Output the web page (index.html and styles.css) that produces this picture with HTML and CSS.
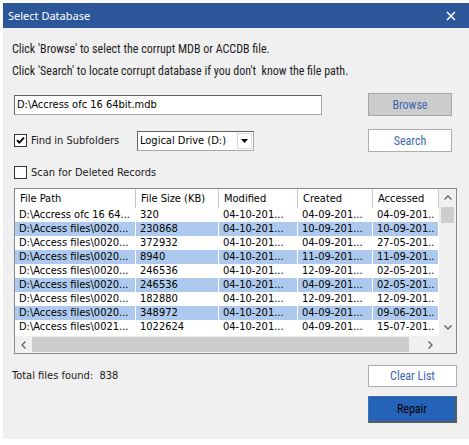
FILE: index.html
```html
<!DOCTYPE html>
<html>
<head>
<meta charset="utf-8">
<title>Select Database</title>
<link rel="stylesheet" href="styles.css">
</head>
<body>
<div class="dialog">
  <div class="titlebar">
    <span class="title">Select Database</span>
    <svg class="close" width="10" height="10" viewBox="0 0 10 10"><path d="M1 1L9 9M9 1L1 9" stroke="#fff" stroke-width="1.5" fill="none"/></svg>
  </div>
  <div class="content">
    <p class="hint">Click 'Browse' to select the corrupt MDB or ACCDB file.</p>
    <p class="hint">Click 'Search' to locate corrupt database if you don't&nbsp; know the file path.</p>

    <div class="row row-path">
      <div class="input">D:\Accress ofc 16 64bit.mdb</div>
      <span></span>
      <button class="btn btn-gray">Browse</button>
    </div>

    <div class="row row-find">
      <div class="check">
        <span class="box"><svg width="11" height="11" viewBox="0 0 11 11"><path d="M2 5.2L4.3 7.6L9 2.6" stroke="#000" stroke-width="1.9" fill="none"/></svg></span>
        <span class="label">Find in Subfolders</span>
      </div>
      <div class="select">
        <span class="select-text">Logical Drive (D:)</span>
        <span class="select-arrow"><svg width="7" height="4" viewBox="0 0 7 4"><path d="M0 0H7L3.5 4Z" fill="#000"/></svg></span>
      </div>
      <span></span>
      <button class="btn">Search</button>
    </div>

    <div class="row row-scan">
      <div class="check">
        <span class="box"></span>
        <span class="label">Scan for Deleted Records</span>
      </div>
    </div>

    <div class="list">
      <div class="cols">
        <div class="grid head">
          <div class="hc">File Path</div>
          <div class="hc">File Size (KB)</div>
          <div class="hc">Modified</div>
          <div class="hc">Created</div>
          <div class="hc">Accessed</div>
        </div>
        <div class="grid tr"><div class="td">D:\Accress ofc 16 64...</div><div class="td">320</div><div class="td">04-10-201...</div><div class="td">04-09-201...</div><div class="td">04-09-201..</div></div>
        <div class="grid tr alt"><div class="td">D:\Access files\0020...</div><div class="td">230868</div><div class="td">04-10-201...</div><div class="td">10-09-201...</div><div class="td">10-09-201..</div></div>
        <div class="grid tr"><div class="td">D:\Access files\0020...</div><div class="td">372932</div><div class="td">04-10-201...</div><div class="td">04-09-201...</div><div class="td">27-05-201..</div></div>
        <div class="grid tr alt"><div class="td">D:\Access files\0020...</div><div class="td">8940</div><div class="td">04-10-201...</div><div class="td">11-09-201...</div><div class="td">11-09-201..</div></div>
        <div class="grid tr"><div class="td">D:\Access files\0020...</div><div class="td">246536</div><div class="td">04-10-201...</div><div class="td">12-09-201...</div><div class="td">02-05-201..</div></div>
        <div class="grid tr alt"><div class="td">D:\Access files\0020...</div><div class="td">246536</div><div class="td">04-10-201...</div><div class="td">04-09-201...</div><div class="td">02-05-201..</div></div>
        <div class="grid tr"><div class="td">D:\Access files\0020...</div><div class="td">182880</div><div class="td">04-10-201...</div><div class="td">12-09-201...</div><div class="td">12-09-201..</div></div>
        <div class="grid tr alt"><div class="td">D:\Access files\0020...</div><div class="td">348972</div><div class="td">04-10-201...</div><div class="td">04-09-201...</div><div class="td">09-06-201..</div></div>
        <div class="grid tr"><div class="td">D:\Access files\0021...</div><div class="td">1022624</div><div class="td">04-10-201...</div><div class="td">04-09-201...</div><div class="td">15-07-201..</div></div>
      </div>
      <div class="vscroll">
        <span class="sb-btn"><svg width="8" height="5" viewBox="0 0 8 5"><path d="M0.5 4.5L4 1L7.5 4.5" stroke="#606060" stroke-width="1.3" fill="none"/></svg></span>
        <span class="vthumb"></span>
        <span class="sb-fill"></span>
        <span class="sb-btn"><svg width="8" height="5" viewBox="0 0 8 5"><path d="M0.5 0.5L4 4L7.5 0.5" stroke="#606060" stroke-width="1.3" fill="none"/></svg></span>
      </div>
      <div class="hscroll">
        <span class="sb-btn"><svg width="5" height="8" viewBox="0 0 5 8"><path d="M4.5 0.5L1 4L4.5 7.5" stroke="#606060" stroke-width="1.3" fill="none"/></svg></span>
        <span class="hthumb"></span>
        <span class="sb-fill"></span>
        <span class="sb-btn"><svg width="5" height="8" viewBox="0 0 5 8"><path d="M0.5 0.5L4 4L0.5 7.5" stroke="#606060" stroke-width="1.3" fill="none"/></svg></span>
      </div>
      <div class="corner"></div>
    </div>

    <div class="footer">
      <span class="total">Total files found:&nbsp; 838</span>
      <div class="actions">
        <button class="btn btn-wide">Clear List</button>
        <button class="btn btn-wide btn-repair">Repair</button>
      </div>
    </div>
  </div>
</div>
</body>
</html>
```
FILE: styles.css
```css
* { box-sizing: border-box; }
body { margin: 0; background: #ffffff; }

.dialog {
  margin: 3px 0 0 3px;
  width: 466px;
  height: 436px;
  background: #f0f0f0;
  display: flex;
  flex-direction: column;
}

.titlebar {
  height: 25px;
  flex: none;
  background: #2b579a;
  display: flex;
  align-items: center;
  justify-content: space-between;
  padding: 0 13px 0 5px;
  color: #ffffff;
  font-family: "Noto Sans", sans-serif;
  font-size: 11px;
}
.close { display: block; }

.content {
  display: flex;
  flex-direction: column;
  padding: 10px 12px 0 11px;
}

.hint {
  margin: 0 0 0 -2px;
  font-family: Roboto, sans-serif;
  font-stretch: condensed;
  font-size: 12px;
  line-height: 22px;
  color: #1e1e1e;
  white-space: pre;
}

.row { display: grid; align-items: center; }
.row-path {
  margin-top: 11px;
  height: 23px;
  grid-template-columns: 308px 1fr 84px;
  padding-right: 5px;
}
.row-find {
  margin-top: 13px;
  height: 23px;
  grid-template-columns: 123px 117px 1fr 84px;
  padding-right: 5px;
}
.row-scan {
  margin-top: 13px;
  height: 14px;
}

.input {
  height: 20px;
  background: #ffffff;
  border: 1px solid #a9a9a9;
  border-top-color: #646464;
  border-left-color: #646464;
  padding-left: 2px;
  font-family: "DejaVu Sans Condensed", "DejaVu Sans", sans-serif;
  font-size: 11px;
  line-height: 18px;
  color: #000;
  white-space: nowrap;
}

.btn {
  display: flex;
  align-items: center;
  justify-content: center;
  height: 23px;
  padding: 0;
  background: #ffffff;
  border: 1px solid #adadad;
  color: #3c67ae;
  font-family: Roboto, sans-serif;
  font-stretch: condensed;
  font-size: 12px;
}
.btn-gray { background: #cccccc; border-color: #a5a5a5; }

.check {
  display: flex;
  align-items: center;
  gap: 4px;
}
.box {
  width: 13px;
  height: 13px;
  flex: none;
  background: #ffffff;
  border: 1px solid #333333;
  display: flex;
  align-items: center;
  justify-content: center;
}
.box svg { display: block; }
.label {
  font-family: "DejaVu Sans Condensed", "DejaVu Sans", sans-serif;
  font-size: 11px;
  color: #1a1a1a;
  white-space: nowrap;
}

.select {
  height: 20px;
  display: flex;
  background: #ffffff;
  border: 1px solid #a9a9a9;
  border-top-color: #646464;
  border-left-color: #646464;
}
.select-text {
  flex: 1;
  padding-left: 2px;
  font-family: "DejaVu Sans Condensed", "DejaVu Sans", sans-serif;
  font-size: 11px;
  line-height: 18px;
  color: #000;
  white-space: nowrap;
}
.select-arrow {
  width: 15px;
  margin: 1px;
  display: flex;
  align-items: center;
  justify-content: center;
  border: 1px solid #dcdcdc;
  background: #ffffff;
}
.select-arrow svg { display: block; }

.list {
  margin-top: 9px;
  width: 443px;
  height: 166px;
  background: #ffffff;
  border: 1px solid #828790;
  display: grid;
  grid-template-columns: 424px 17px;
  grid-template-rows: 147px 17px;
}
.cols { overflow: hidden; }
.grid {
  display: grid;
  grid-template-columns: 121px 83px 79px 75px 66px;
}
.head { height: 19px; }
.hc {
  padding-left: 5px;
  border-right: 1px solid #c8c8c8;
  font-family: "DejaVu Sans Condensed", "DejaVu Sans", sans-serif;
  font-size: 11px;
  line-height: 19px;
  color: #000;
  white-space: nowrap;
  overflow: hidden;
}
.tr { height: 14px; }
.tr.alt { background: #adcaee; }
.td {
  padding-left: 4px;
  border-right: 1px solid #ffffff;
  font-family: "DejaVu Sans Condensed", "DejaVu Sans", sans-serif;
  font-size: 11px;
  line-height: 14px;
  color: #000;
  white-space: nowrap;
  overflow: hidden;
}

.vscroll {
  background: #f0f0f0;
  display: flex;
  flex-direction: column;
}
.hscroll {
  background: #f0f0f0;
  display: flex;
}
.corner { background: #f0f0f0; }
.sb-btn {
  width: 17px;
  height: 17px;
  flex: none;
  display: flex;
  align-items: center;
  justify-content: center;
}
.sb-btn svg { display: block; }
.sb-fill { flex: 1; }
.vthumb {
  height: 16px;
  margin: 1px 2px 0 2px;
  background: #cdcdcd;
  flex: none;
}
.hthumb {
  width: 377px;
  margin: 1px 0;
  background: #cdcdcd;
  flex: none;
}

.footer {
  margin-top: 11px;
  display: flex;
  justify-content: space-between;
  align-items: flex-start;
}
.total {
  margin-left: -2px;
  font-family: "DejaVu Sans Condensed", "DejaVu Sans", sans-serif;
  font-size: 11px;
  line-height: 22px;
  color: #1a1a1a;
}
.actions {
  display: flex;
  flex-direction: column;
  gap: 9px;
}
.btn-wide { width: 89px; height: 22px; }
.btn-repair {
  height: 27px;
  background: #2563b9;
  border: 1px solid #3f70b5;
  border-right: 2px solid #5a5a5a;
  border-bottom: 2px solid #5a5a5a;
  color: #000000;
}
```
